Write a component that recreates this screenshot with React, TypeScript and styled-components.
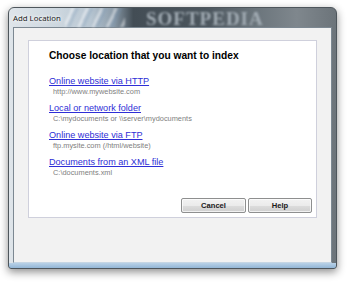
import React from 'react';
import styled, { createGlobalStyle } from 'styled-components';

const GlobalStyle = createGlobalStyle`
  html, body {
    margin: 0;
    padding: 0;
    background: #ffffff;
  }
  body {
    font-family: 'Liberation Sans', Arial, sans-serif;
  }
`;

const Page = styled.div`
  width: 350px;
  height: 283px;
  padding: 7px 0 0 8px;
  box-sizing: border-box;
`;

const Window = styled.div`
  width: 329px;
  height: 262px;
  box-sizing: border-box;
  display: flex;
  flex-direction: column;
  padding: 0 4px 5px 4px;
  border: 1px solid #4e565c;
  border-radius: 6px 6px 3px 3px;
  box-shadow: 0 3px 9px rgba(0, 0, 0, 0.45);
  background:
    linear-gradient(to top, #93b6d6 0, #b9d2e8 5px, transparent 5px),
    linear-gradient(
      to right,
      #dfe5ea 0%,
      #cdd7df 15%,
      #b8c6d2 25%,
      #8a9aa8 32%,
      #434d55 38%,
      #4b555d 60%,
      #6a747b 75%,
      #7f878d 88%,
      #6c747a 100%
    );
  overflow: hidden;
`;

const TitleBar = styled.div`
  position: relative;
  height: 19px;
  flex: none;
  display: flex;
  align-items: center;
`;

const TitleText = styled.span`
  font-family: 'Noto Sans', 'Liberation Sans', sans-serif;
  font-size: 7.8px;
  color: #1a1a1a;
  position: relative;
  z-index: 1;
  text-shadow: 0 0 5px #ffffff, 0 0 3px #ffffff;
`;

const Watermark = styled.span`
  position: absolute;
  left: 133px;
  top: 0;
  font-family: 'Liberation Serif', 'Times New Roman', serif;
  font-weight: bold;
  font-size: 19px;
  letter-spacing: 1px;
  color: #a2acb4;
  filter: blur(0.8px);
`;

const Streaks = styled.span`
  position: absolute;
  left: 52px;
  top: 0;
  width: 60px;
  height: 19px;
  background: repeating-linear-gradient(
    115deg,
    rgba(255, 255, 255, 0) 0 6px,
    rgba(255, 255, 255, 0.45) 6px 9px,
    rgba(120, 150, 180, 0.25) 9px 13px
  );
  filter: blur(1px);
`;

const Client = styled.div`
  flex: 1;
  background: #f2f2f2;
  border: 1px solid #7c8892;
  border-bottom-color: #c6d6e4;
  padding: 12px 14px 0 14px;
`;

const Panel = styled.div`
  height: 178px;
  box-sizing: border-box;
  background: #ffffff;
  border: 1px solid #cfd0dc;
  display: flex;
  flex-direction: column;
  padding: 8px 4px 4px 20px;
`;

const Heading = styled.div`
  font-weight: bold;
  font-size: 10.2px;
  color: #000000;
  line-height: 13px;
  margin-bottom: 14px;
`;

const OptionList = styled.div`
  display: flex;
  flex-direction: column;
  gap: 6px;
`;

const Option = styled.div`
  display: flex;
  flex-direction: column;
`;

const OptionLink = styled.a`
  font-size: 9.1px;
  line-height: 11px;
  color: #2e2ed6;
  text-decoration: underline;
  cursor: pointer;
`;

const OptionHint = styled.span`
  font-size: 7.4px;
  line-height: 10px;
  color: #808080;
  padding-left: 4px;
`;

const ButtonRow = styled.div`
  margin-top: auto;
  display: flex;
  justify-content: flex-end;
  gap: 2px;
`;

const DialogButton = styled.button<{ $w: number }>`
  width: ${(p) => p.$w}px;
  height: 15px;
  padding: 0;
  font-family: 'Liberation Sans', Arial, sans-serif;
  font-weight: bold;
  font-size: 7.6px;
  color: #1a1a1a;
  border: 1px solid #8e8f8f;
  border-radius: 2px;
  background: linear-gradient(to bottom, #f2f2f2 0%, #ebebeb 50%, #dddddd 51%, #cfcfcf 100%);
  box-shadow: inset 0 0 0 1px rgba(255, 255, 255, 0.7);
`;

const options = [
  { label: 'Online website via HTTP', hint: 'http://www.mywebsite.com' },
  { label: 'Local or network folder', hint: 'C:\\mydocuments or \\\\server\\mydocuments' },
  { label: 'Online website via FTP', hint: 'ftp.mysite.com (/html/website)' },
  { label: 'Documents from an XML file', hint: 'C:\\documents.xml' },
];

export default function App() {
  return (
    <Page>
      <GlobalStyle />
      <Window>
        <TitleBar>
          <Streaks />
          <Watermark>SOFTPEDIA</Watermark>
          <TitleText>Add Location</TitleText>
        </TitleBar>
        <Client>
          <Panel>
            <Heading>Choose location that you want to index</Heading>
            <OptionList>
              {options.map((o) => (
                <Option key={o.label}>
                  <OptionLink>{o.label}</OptionLink>
                  <OptionHint>{o.hint}</OptionHint>
                </Option>
              ))}
            </OptionList>
            <ButtonRow>
              <DialogButton $w={65}>Cancel</DialogButton>
              <DialogButton $w={64}>Help</DialogButton>
            </ButtonRow>
          </Panel>
        </Client>
      </Window>
    </Page>
  );
}
